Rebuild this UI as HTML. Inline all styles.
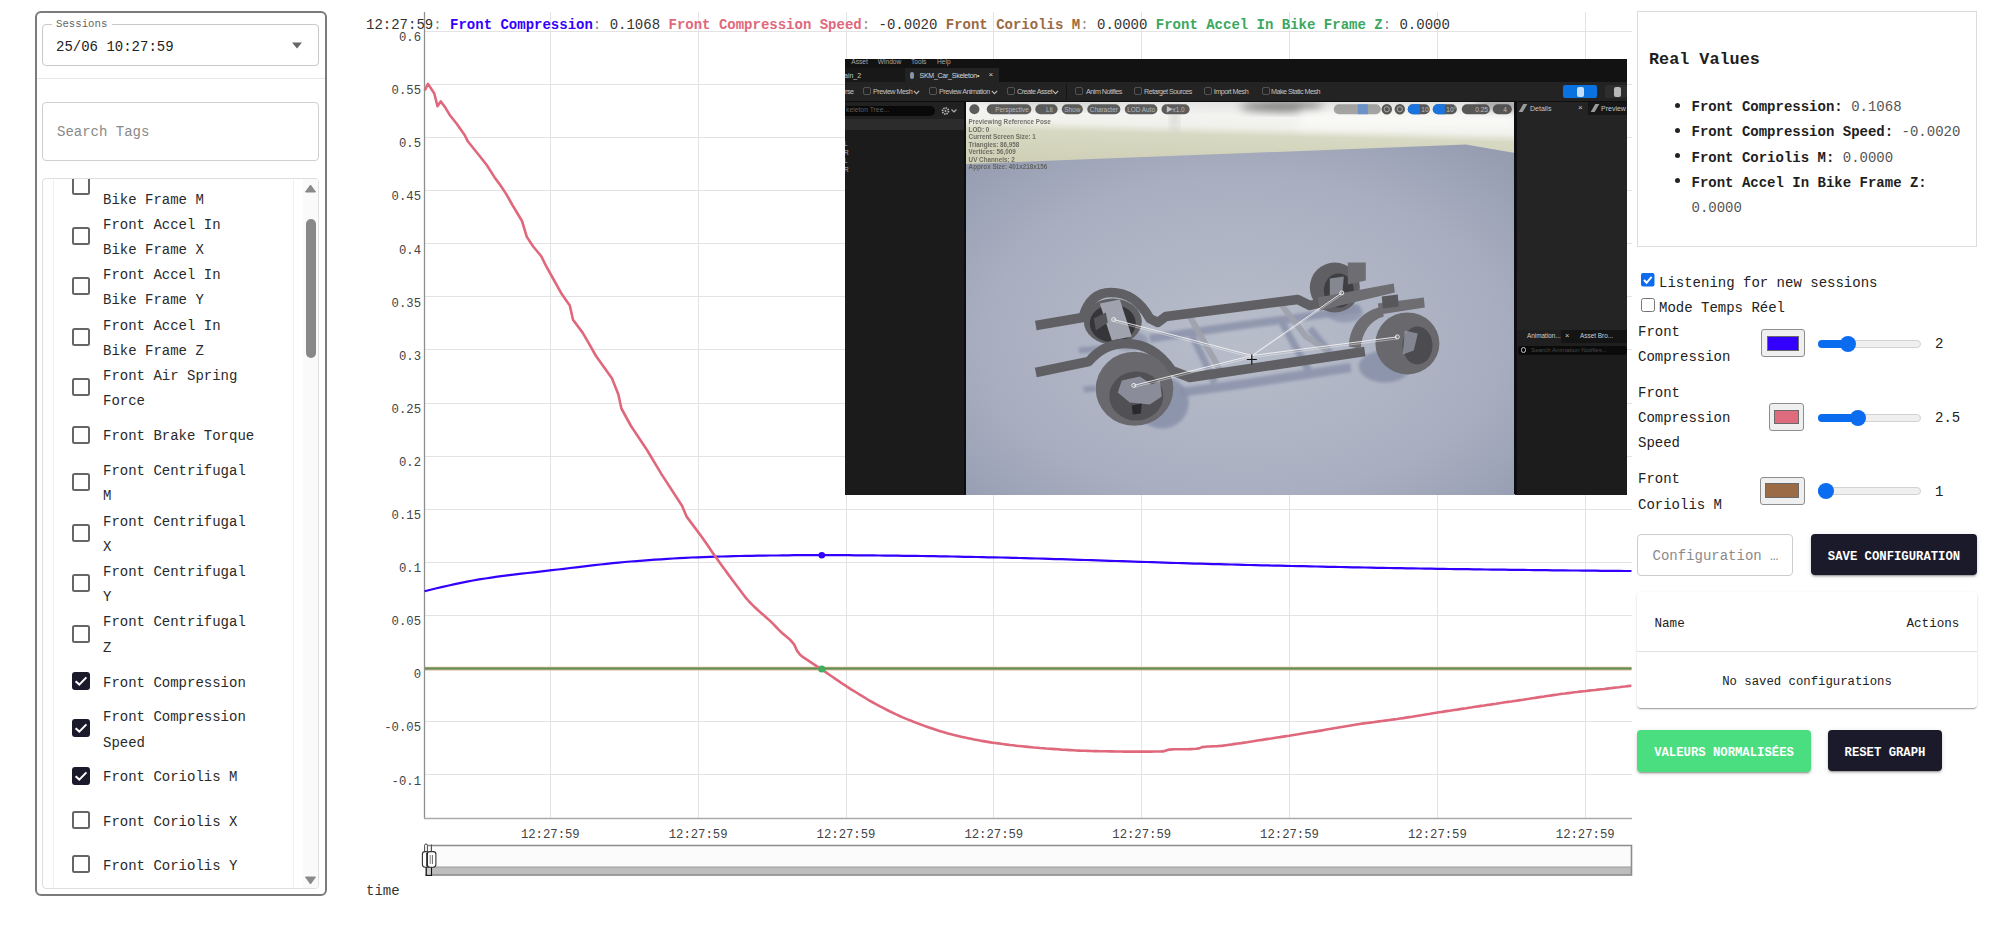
<!DOCTYPE html>
<html><head><meta charset="utf-8"><title>Dashboard</title><style>
html,body{margin:0;padding:0}
body{width:2000px;height:941px;overflow:hidden;background:#fff;position:relative;font-family:"Liberation Mono",monospace;font-size:14px}
.t{position:absolute;white-space:nowrap;font-family:"Liberation Mono",monospace;font-size:14px;line-height:16px}
i{font-style:normal;color:#888}
.ylab{left:340px;width:81px;text-align:right;font-size:12.25px;color:#444}
.xlab{top:827px;width:80px;text-align:center;font-size:12.25px;color:#444}
.btn{position:absolute;box-sizing:border-box;padding-top:4px;border-radius:4px;color:#fff;font-family:"Liberation Mono",monospace;font-weight:bold;font-size:12.25px;display:flex;align-items:center;justify-content:center;box-shadow:0 3px 1px -2px rgba(0,0,0,0.2),0 2px 2px 0 rgba(0,0,0,0.14),0 1px 5px 0 rgba(0,0,0,0.12)}
</style></head>
<body>
<svg style="position:absolute;left:0;top:0" width="2000" height="941">
<line x1="424" y1="31.5" x2="1632" y2="31.5" stroke="#e3e3e3" stroke-width="1"/>
<line x1="424" y1="84.5" x2="1632" y2="84.5" stroke="#e3e3e3" stroke-width="1"/>
<line x1="424" y1="137.5" x2="1632" y2="137.5" stroke="#e3e3e3" stroke-width="1"/>
<line x1="424" y1="190.5" x2="1632" y2="190.5" stroke="#e3e3e3" stroke-width="1"/>
<line x1="424" y1="243.5" x2="1632" y2="243.5" stroke="#e3e3e3" stroke-width="1"/>
<line x1="424" y1="296.5" x2="1632" y2="296.5" stroke="#e3e3e3" stroke-width="1"/>
<line x1="424" y1="349.5" x2="1632" y2="349.5" stroke="#e3e3e3" stroke-width="1"/>
<line x1="424" y1="403.5" x2="1632" y2="403.5" stroke="#e3e3e3" stroke-width="1"/>
<line x1="424" y1="456.5" x2="1632" y2="456.5" stroke="#e3e3e3" stroke-width="1"/>
<line x1="424" y1="509.5" x2="1632" y2="509.5" stroke="#e3e3e3" stroke-width="1"/>
<line x1="424" y1="562.5" x2="1632" y2="562.5" stroke="#e3e3e3" stroke-width="1"/>
<line x1="424" y1="615.5" x2="1632" y2="615.5" stroke="#e3e3e3" stroke-width="1"/>
<line x1="424" y1="668.5" x2="1632" y2="668.5" stroke="#e3e3e3" stroke-width="1"/>
<line x1="424" y1="721.5" x2="1632" y2="721.5" stroke="#e3e3e3" stroke-width="1"/>
<line x1="424" y1="774.5" x2="1632" y2="774.5" stroke="#e3e3e3" stroke-width="1"/>
<line x1="550.5" y1="12" x2="550.5" y2="818" stroke="#e3e3e3" stroke-width="1"/>
<line x1="698.5" y1="12" x2="698.5" y2="818" stroke="#e3e3e3" stroke-width="1"/>
<line x1="846.5" y1="12" x2="846.5" y2="818" stroke="#e3e3e3" stroke-width="1"/>
<line x1="993.5" y1="12" x2="993.5" y2="818" stroke="#e3e3e3" stroke-width="1"/>
<line x1="1141.5" y1="12" x2="1141.5" y2="818" stroke="#e3e3e3" stroke-width="1"/>
<line x1="1289.5" y1="12" x2="1289.5" y2="818" stroke="#e3e3e3" stroke-width="1"/>
<line x1="1437.5" y1="12" x2="1437.5" y2="818" stroke="#e3e3e3" stroke-width="1"/>
<line x1="1585.5" y1="12" x2="1585.5" y2="818" stroke="#e3e3e3" stroke-width="1"/>
<line x1="424.5" y1="12" x2="424.5" y2="818.5" stroke="#8f8f8f" stroke-width="1.3"/>
<line x1="424" y1="818.5" x2="1632" y2="818.5" stroke="#aaa" stroke-width="1.5"/>
<line x1="425" y1="668.6" x2="1631.5" y2="668.6" stroke="#d7b39a" stroke-width="3.6"/>
<line x1="425" y1="668.6" x2="1631.5" y2="668.6" stroke="#5f8f4f" stroke-width="2"/>
<path d="M424.5,591.3 L430.6,589.8 L436.6,588.3 L442.7,586.9 L448.8,585.5 L454.8,584.1 L460.9,582.8 L467.0,581.6 L473.0,580.5 L479.1,579.4 L485.2,578.5 L491.2,577.6 L497.3,576.7 L503.3,575.9 L509.4,575.1 L515.5,574.4 L521.5,573.7 L527.6,573.0 L533.7,572.3 L539.7,571.6 L545.8,570.9 L551.9,570.2 L557.9,569.5 L564.0,568.8 L570.1,568.0 L576.1,567.3 L582.2,566.6 L588.3,565.8 L594.3,565.1 L600.4,564.5 L606.5,563.8 L612.5,563.2 L618.6,562.6 L624.7,562.0 L630.7,561.5 L636.8,561.1 L642.9,560.6 L648.9,560.1 L655.0,559.7 L661.0,559.3 L667.1,558.9 L673.2,558.5 L679.2,558.1 L685.3,557.8 L691.4,557.5 L697.4,557.3 L703.5,557.1 L709.6,556.8 L715.6,556.7 L721.7,556.5 L727.8,556.3 L733.8,556.2 L739.9,556.0 L746.0,555.9 L752.0,555.8 L758.1,555.7 L764.2,555.6 L770.2,555.5 L776.3,555.5 L782.4,555.4 L788.4,555.3 L794.5,555.2 L800.6,555.2 L806.6,555.1 L812.7,555.1 L818.7,555.1 L824.8,555.1 L830.9,555.1 L836.9,555.1 L843.0,555.2 L849.1,555.2 L855.1,555.3 L861.2,555.3 L867.3,555.4 L873.3,555.4 L879.4,555.5 L885.5,555.6 L891.5,555.6 L897.6,555.7 L903.7,555.8 L909.7,555.8 L915.8,555.9 L921.9,556.0 L927.9,556.1 L934.0,556.2 L940.1,556.3 L946.1,556.4 L952.2,556.5 L958.2,556.6 L964.3,556.8 L970.4,556.9 L976.4,557.0 L982.5,557.1 L988.6,557.3 L994.6,557.4 L1000.7,557.5 L1006.8,557.7 L1012.8,557.8 L1018.9,558.0 L1025.0,558.1 L1031.0,558.3 L1037.1,558.5 L1043.2,558.7 L1049.2,558.9 L1055.3,559.1 L1061.4,559.2 L1067.4,559.4 L1073.5,559.6 L1079.6,559.8 L1085.6,560.0 L1091.7,560.2 L1097.8,560.4 L1103.8,560.6 L1109.9,560.8 L1115.9,561.0 L1122.0,561.2 L1128.1,561.4 L1134.1,561.6 L1140.2,561.8 L1146.3,562.0 L1152.3,562.2 L1158.4,562.4 L1164.5,562.6 L1170.5,562.8 L1176.6,563.0 L1182.7,563.2 L1188.7,563.4 L1194.8,563.6 L1200.9,563.7 L1206.9,563.9 L1213.0,564.1 L1219.1,564.2 L1225.1,564.4 L1231.2,564.5 L1237.3,564.7 L1243.3,564.8 L1249.4,565.0 L1255.4,565.1 L1261.5,565.3 L1267.6,565.4 L1273.6,565.6 L1279.7,565.7 L1285.8,565.8 L1291.8,566.0 L1297.9,566.1 L1304.0,566.2 L1310.0,566.4 L1316.1,566.5 L1322.2,566.6 L1328.2,566.8 L1334.3,566.9 L1340.4,567.0 L1346.4,567.1 L1352.5,567.3 L1358.6,567.4 L1364.6,567.5 L1370.7,567.6 L1376.8,567.8 L1382.8,567.9 L1388.9,568.0 L1395.0,568.1 L1401.0,568.2 L1407.1,568.3 L1413.1,568.4 L1419.2,568.5 L1425.3,568.6 L1431.3,568.7 L1437.4,568.8 L1443.5,568.9 L1449.5,569.0 L1455.6,569.1 L1461.7,569.1 L1467.7,569.2 L1473.8,569.3 L1479.9,569.4 L1485.9,569.5 L1492.0,569.6 L1498.1,569.6 L1504.1,569.7 L1510.2,569.8 L1516.3,569.9 L1522.3,569.9 L1528.4,570.0 L1534.5,570.1 L1540.5,570.2 L1546.6,570.2 L1552.7,570.3 L1558.7,570.4 L1564.8,570.4 L1570.8,570.5 L1576.9,570.5 L1583.0,570.6 L1589.0,570.7 L1595.1,570.7 L1601.2,570.8 L1607.2,570.8 L1613.3,570.9 L1619.4,570.9 L1625.4,571.0 L1631.5,571.0" fill="none" stroke="#3300ff" stroke-width="2.2" stroke-linejoin="round"/>
<path d="M424.8,90.3 L428.0,83.9 L434.3,93.5 L437.5,106.2 L440.7,101.4 L445.5,107.8 L450.3,115.8 L456.7,123.8 L464.6,134.9 L467.8,141.3 L474.2,149.3 L480.6,157.2 L486.9,165.2 L494.9,177.9 L499.7,184.3 L506.1,193.9 L512.4,205.0 L522.0,221.0 L526.8,236.9 L533.2,246.5 L541.1,256.0 L545.9,265.6 L553.9,280.0 L561.9,294.3 L569.8,305.5 L573.0,319.8 L582.6,332.6 L589.0,343.7 L596.0,356.0 L611.9,378.3 L618.3,394.2 L621.4,408.5 L631.0,426.0 L647.0,450.0 L661.3,473.9 L682.0,505.8 L686.8,516.9 L701.1,536.0 L704.1,540.2 L707.1,544.6 L710.1,549.0 L713.1,553.4 L716.1,557.6 L719.1,561.8 L722.1,566.0 L725.1,570.1 L728.1,574.1 L731.1,578.2 L734.1,582.2 L737.1,586.2 L740.1,590.3 L743.1,594.3 L746.1,598.1 L749.1,601.5 L752.1,604.6 L755.1,607.5 L758.1,610.3 L761.1,612.9 L764.1,615.5 L767.1,618.2 L770.1,620.9 L773.1,623.9 L776.1,627.0 L779.1,630.1 L782.1,633.0 L785.1,635.5 L788.1,637.9 L791.1,640.8 L794.1,644.4 L797.1,650.9 L800.1,654.8 L803.1,657.2 L806.1,659.1 L809.1,661.1 L812.1,663.1 L815.1,665.1 L818.1,667.1 L821.1,669.0 L824.1,671.1 L827.1,673.1 L830.1,675.2 L833.1,677.3 L836.1,679.4 L839.1,681.4 L842.1,683.5 L845.1,685.4 L848.1,687.3 L851.1,689.3 L854.1,691.2 L857.1,693.0 L860.1,694.9 L863.1,696.7 L866.1,698.5 L869.1,700.3 L872.1,702.0 L875.1,703.7 L878.1,705.3 L881.1,706.9 L884.1,708.4 L887.1,710.0 L890.1,711.5 L893.1,712.9 L896.1,714.4 L899.1,715.7 L902.1,717.1 L905.1,718.4 L908.1,719.6 L911.1,720.8 L914.1,722.0 L917.1,723.1 L920.1,724.3 L923.1,725.4 L926.1,726.5 L929.1,727.5 L932.1,728.5 L935.1,729.5 L938.1,730.5 L941.1,731.4 L944.1,732.3 L947.1,733.2 L950.1,734.0 L953.1,734.8 L956.1,735.5 L959.1,736.2 L962.1,736.9 L965.1,737.6 L968.1,738.2 L971.1,738.8 L974.1,739.4 L977.1,740.0 L980.1,740.6 L983.1,741.1 L986.1,741.6 L989.1,742.1 L992.1,742.6 L995.1,743.0 L998.1,743.4 L1001.1,743.8 L1004.1,744.2 L1007.1,744.6 L1010.1,745.0 L1013.1,745.3 L1016.1,745.7 L1019.1,746.0 L1022.1,746.3 L1025.1,746.6 L1028.1,746.9 L1031.1,747.2 L1034.1,747.5 L1037.1,747.7 L1040.1,748.0 L1043.1,748.2 L1046.1,748.5 L1049.1,748.7 L1052.1,748.9 L1055.1,749.1 L1058.1,749.3 L1061.1,749.6 L1064.1,749.8 L1067.1,749.9 L1070.1,750.1 L1073.1,750.3 L1076.1,750.5 L1079.1,750.6 L1082.1,750.7 L1085.1,750.8 L1088.1,750.9 L1091.1,751.0 L1094.1,751.1 L1097.1,751.1 L1100.1,751.2 L1103.1,751.3 L1106.1,751.3 L1109.1,751.4 L1112.1,751.4 L1115.1,751.5 L1118.1,751.5 L1121.1,751.5 L1124.1,751.6 L1127.1,751.6 L1130.1,751.6 L1133.1,751.6 L1136.1,751.6 L1139.1,751.6 L1142.1,751.6 L1145.1,751.6 L1148.1,751.6 L1151.1,751.6 L1154.1,751.5 L1157.1,751.5 L1160.1,751.5 L1163.1,751.4 L1166.1,750.5 L1169.1,749.6 L1172.1,749.4 L1175.1,749.3 L1178.1,749.3 L1181.1,749.2 L1184.1,749.2 L1187.1,749.2 L1190.1,749.1 L1193.1,749.0 L1196.1,748.8 L1199.1,748.4 L1202.1,747.1 L1205.1,746.7 L1208.1,746.5 L1211.1,746.4 L1214.1,746.2 L1217.1,746.1 L1220.1,745.9 L1223.1,745.6 L1226.1,745.2 L1229.1,744.8 L1232.1,744.4 L1235.1,743.9 L1238.1,743.5 L1241.1,743.1 L1244.1,742.6 L1247.1,742.2 L1250.1,741.7 L1253.1,741.3 L1256.1,740.8 L1259.1,740.3 L1262.1,739.9 L1265.1,739.4 L1268.1,738.9 L1271.1,738.5 L1274.1,738.0 L1277.1,737.5 L1280.1,737.1 L1283.1,736.6 L1286.1,736.1 L1289.1,735.7 L1292.1,735.2 L1295.1,734.7 L1298.1,734.3 L1301.1,733.8 L1304.1,733.3 L1307.1,732.8 L1310.1,732.3 L1313.1,731.9 L1316.1,731.4 L1319.1,730.9 L1322.1,730.4 L1325.1,729.8 L1328.1,729.3 L1331.1,728.8 L1334.1,728.2 L1337.1,727.7 L1340.1,727.2 L1343.1,726.7 L1346.1,726.2 L1349.1,725.7 L1352.1,725.2 L1355.1,724.7 L1358.1,724.2 L1361.1,723.8 L1364.1,723.4 L1367.1,723.0 L1370.1,722.6 L1373.1,722.2 L1376.1,721.8 L1379.1,721.4 L1382.1,721.0 L1385.1,720.6 L1388.1,720.2 L1391.1,719.8 L1394.1,719.4 L1397.1,719.0 L1400.1,718.5 L1403.1,718.1 L1406.1,717.6 L1409.1,717.1 L1412.1,716.7 L1415.1,716.2 L1418.1,715.7 L1421.1,715.2 L1424.1,714.7 L1427.1,714.2 L1430.1,713.8 L1433.1,713.3 L1436.1,712.8 L1439.1,712.3 L1442.1,711.9 L1445.1,711.4 L1448.1,710.9 L1451.1,710.5 L1454.1,710.0 L1457.1,709.6 L1460.1,709.1 L1463.1,708.6 L1466.1,708.2 L1469.1,707.7 L1472.1,707.3 L1475.1,706.8 L1478.1,706.4 L1481.1,705.9 L1484.1,705.5 L1487.1,705.0 L1490.1,704.6 L1493.1,704.1 L1496.1,703.7 L1499.1,703.2 L1502.1,702.8 L1505.1,702.3 L1508.1,701.9 L1511.1,701.5 L1514.1,701.0 L1517.1,700.6 L1520.1,700.1 L1523.1,699.7 L1526.1,699.2 L1529.1,698.8 L1532.1,698.3 L1535.1,697.9 L1538.1,697.4 L1541.1,696.9 L1544.1,696.5 L1547.1,696.0 L1550.1,695.6 L1553.1,695.1 L1556.1,694.7 L1559.1,694.3 L1562.1,693.8 L1565.1,693.5 L1568.1,693.1 L1571.1,692.7 L1574.1,692.3 L1577.1,692.0 L1580.1,691.6 L1583.1,691.3 L1586.1,691.0 L1589.1,690.6 L1592.1,690.3 L1595.1,690.0 L1598.1,689.6 L1601.1,689.3 L1604.1,689.0 L1607.1,688.6 L1610.1,688.2 L1613.1,687.9 L1616.1,687.5 L1619.1,687.2 L1622.1,686.8 L1625.1,686.5 L1628.1,686.1 L1631.1,685.7 L1631.4,685.7" fill="none" stroke="#e0687c" stroke-width="2.6" stroke-linejoin="round"/>
<circle cx="821.8" cy="555.2" r="3.3" fill="#3300ff"/>
<circle cx="821.8" cy="669" r="3.6" fill="#3fae5e"/>
<rect x="425" y="845" width="1206.5" height="30" fill="#fbfbfb"/>
<rect x="425" y="867" width="1206.5" height="8.5" fill="#bdbdbd"/>
<path d="M425,875 L1631.5,875 L1631.5,845.5 L425,845.5" fill="none" stroke="#8c8c8c" stroke-width="1.6"/>
<line x1="425" y1="867" x2="1631.5" y2="867" stroke="#9a9a9a" stroke-width="1"/>
<rect x="424.6" y="844" width="2.8" height="9" rx="1.4" fill="#fff" stroke="#333" stroke-width="0.9"/>
<rect x="426.3" y="867" width="5.2" height="8.4" fill="#ccc" stroke="#111" stroke-width="1.1"/>
<rect x="430.8" y="844.5" width="1.2" height="8" fill="#555"/>
<rect x="422.4" y="851.6" width="6" height="15.6" rx="2.6" fill="#fff" stroke="#333" stroke-width="1.1"/>
<rect x="427.3" y="851.6" width="8.6" height="15.6" rx="2.6" fill="#fff" stroke="#333" stroke-width="1.1"/>
<line x1="426.9" y1="853" x2="426.9" y2="866" stroke="#111" stroke-width="1.2"/>
<line x1="430.2" y1="855" x2="430.2" y2="864" stroke="#777" stroke-width="0.9"/><line x1="432.4" y1="855" x2="432.4" y2="864" stroke="#555" stroke-width="0.9"/>
</svg>
<div class="t ylab" style="top:30.1px">0.6</div>
<div class="t ylab" style="top:83.2px">0.55</div>
<div class="t ylab" style="top:136.3px">0.5</div>
<div class="t ylab" style="top:189.4px">0.45</div>
<div class="t ylab" style="top:242.5px">0.4</div>
<div class="t ylab" style="top:295.6px">0.35</div>
<div class="t ylab" style="top:348.7px">0.3</div>
<div class="t ylab" style="top:401.8px">0.25</div>
<div class="t ylab" style="top:454.9px">0.2</div>
<div class="t ylab" style="top:508.0px">0.15</div>
<div class="t ylab" style="top:561.1px">0.1</div>
<div class="t ylab" style="top:614.2px">0.05</div>
<div class="t ylab" style="top:667.3px">0</div>
<div class="t ylab" style="top:720.4px">-0.05</div>
<div class="t ylab" style="top:773.5px">-0.1</div>
<div class="t xlab" style="left:510.3px">12:27:59</div>
<div class="t xlab" style="left:658.1px">12:27:59</div>
<div class="t xlab" style="left:806.0px">12:27:59</div>
<div class="t xlab" style="left:953.8px">12:27:59</div>
<div class="t xlab" style="left:1101.7px">12:27:59</div>
<div class="t xlab" style="left:1249.5px">12:27:59</div>
<div class="t xlab" style="left:1397.4px">12:27:59</div>
<div class="t xlab" style="left:1545.2px">12:27:59</div>
<div class="t" style="left:366px;top:883px;color:#333">time</div>
<div class="t" style="left:366px;top:16.8px;color:#333;white-space:pre">12:27:59<i>:</i> <b style="color:#3300ff">Front Compression</b><i>:</i> 0.1068 <b style="color:#e0687c">Front Compression Speed</b><i>:</i> -0.0020 <b style="color:#9b6a43">Front Coriolis M</b><i>:</i> 0.0000 <b style="color:#3aa860">Front Accel In Bike Frame Z</b><i>:</i> 0.0000</div>
<div style="position:absolute;left:845px;top:59px;width:782px;height:435.6px;background:#1b1b1b;overflow:hidden">
<div style="position:absolute;left:0.0px;top:0.0px;width:782.0px;height:23.2px;background:#121212;"></div>
<div style="position:absolute;left:0.0px;top:9.0px;width:60.0px;height:14.2px;background:#181818;"></div>
<div style="position:absolute;left:60.0px;top:9.3px;width:94.0px;height:13.9px;background:#232323;"></div>
<div style="position:absolute;left:6.3px;top:-0.5px;font:6.6px/1 'Liberation Sans',sans-serif;color:#a8a8a8;white-space:pre;">Asset</div>
<div style="position:absolute;left:32.8px;top:-0.5px;font:6.6px/1 'Liberation Sans',sans-serif;color:#a8a8a8;white-space:pre;">Window</div>
<div style="position:absolute;left:66.0px;top:-0.5px;font:6.6px/1 'Liberation Sans',sans-serif;color:#a8a8a8;white-space:pre;">Tools</div>
<div style="position:absolute;left:92.0px;top:-0.5px;font:6.6px/1 'Liberation Sans',sans-serif;color:#a8a8a8;white-space:pre;">Help</div>
<div style="position:absolute;left:-1.0px;top:12.5px;font:7px/1 'Liberation Sans',sans-serif;color:#c8c8c8;white-space:pre;">ain_2</div>
<div style="position:absolute;left:74.5px;top:12.5px;font:7px/1 'Liberation Sans',sans-serif;color:#d8d8d8;white-space:pre;letter-spacing:-0.25px">SKM_Car_Skeleton•</div>
<div style="position:absolute;left:143.5px;top:12.2px;font:8px/1 'Liberation Sans',sans-serif;color:#cfcfcf;white-space:pre;">×</div>
<div style="position:absolute;left:64.5px;top:12.5px;width:4.5px;height:7.5px;background:#8a93a8;border-radius:2px"></div>
<div style="position:absolute;left:0.0px;top:23.2px;width:782.0px;height:18.6px;background:#232323;"></div>
<div style="position:absolute;left:0.0px;top:41.8px;width:782.0px;height:1.0px;background:#0e0e0e;"></div>
<div style="position:absolute;left:0.0px;top:28.5px;font:7.2px/1 'Liberation Sans',sans-serif;color:#c4c4c4;white-space:pre;letter-spacing:-0.5px">rse</div>
<div style="position:absolute;left:28.0px;top:28.5px;font:7.2px/1 'Liberation Sans',sans-serif;color:#c4c4c4;white-space:pre;letter-spacing:-0.5px">Preview Mesh</div>
<div style="position:absolute;left:94.0px;top:28.5px;font:7.2px/1 'Liberation Sans',sans-serif;color:#c4c4c4;white-space:pre;letter-spacing:-0.5px">Preview Animation</div>
<div style="position:absolute;left:172.0px;top:28.5px;font:7.2px/1 'Liberation Sans',sans-serif;color:#c4c4c4;white-space:pre;letter-spacing:-0.5px">Create Asset</div>
<div style="position:absolute;left:241.0px;top:28.5px;font:7.2px/1 'Liberation Sans',sans-serif;color:#c4c4c4;white-space:pre;letter-spacing:-0.5px">Anim Notifies</div>
<div style="position:absolute;left:299.0px;top:28.5px;font:7.2px/1 'Liberation Sans',sans-serif;color:#c4c4c4;white-space:pre;letter-spacing:-0.5px">Retarget Sources</div>
<div style="position:absolute;left:368.7px;top:28.5px;font:7.2px/1 'Liberation Sans',sans-serif;color:#c4c4c4;white-space:pre;letter-spacing:-0.5px">Import Mesh</div>
<div style="position:absolute;left:426.0px;top:28.5px;font:7.2px/1 'Liberation Sans',sans-serif;color:#c4c4c4;white-space:pre;letter-spacing:-0.5px">Make Static Mesh</div>
<div style="position:absolute;left:18.0px;top:28.0px;width:8.0px;height:8.0px;background:transparent;border:1px solid #7a7a7a;border-radius:2px;box-sizing:border-box;opacity:.55"></div>
<div style="position:absolute;left:83.6px;top:28.0px;width:8.0px;height:8.0px;background:transparent;border:1px solid #7a7a7a;border-radius:2px;box-sizing:border-box;opacity:.55"></div>
<div style="position:absolute;left:162.0px;top:28.0px;width:8.0px;height:8.0px;background:transparent;border:1px solid #7a7a7a;border-radius:2px;box-sizing:border-box;opacity:.55"></div>
<div style="position:absolute;left:230.0px;top:28.0px;width:8.0px;height:8.0px;background:transparent;border:1px solid #7a7a7a;border-radius:2px;box-sizing:border-box;opacity:.55"></div>
<div style="position:absolute;left:289.0px;top:28.0px;width:8.0px;height:8.0px;background:transparent;border:1px solid #7a7a7a;border-radius:2px;box-sizing:border-box;opacity:.55"></div>
<div style="position:absolute;left:359.0px;top:28.0px;width:8.0px;height:8.0px;background:transparent;border:1px solid #7a7a7a;border-radius:2px;box-sizing:border-box;opacity:.55"></div>
<div style="position:absolute;left:417.0px;top:28.0px;width:8.0px;height:8.0px;background:transparent;border:1px solid #7a7a7a;border-radius:2px;box-sizing:border-box;opacity:.55"></div>
<div style="position:absolute;left:221.0px;top:24.0px;width:1.0px;height:17.0px;background:#161616;"></div>
<svg style="position:absolute;left:67.5px;top:30.5px" width="7" height="5"><path d="M0.8,0.8 L3.5,3.6 L6.2,0.8" fill="none" stroke="#bbb" stroke-width="1.1"/></svg>
<svg style="position:absolute;left:145.5px;top:30.5px" width="7" height="5"><path d="M0.8,0.8 L3.5,3.6 L6.2,0.8" fill="none" stroke="#bbb" stroke-width="1.1"/></svg>
<svg style="position:absolute;left:206.5px;top:30.5px" width="7" height="5"><path d="M0.8,0.8 L3.5,3.6 L6.2,0.8" fill="none" stroke="#bbb" stroke-width="1.1"/></svg>
<div style="position:absolute;left:718.3px;top:26.0px;width:34.2px;height:13.0px;background:#0a72e0;border-radius:2px"></div>
<div style="position:absolute;left:732.0px;top:27.5px;width:7.0px;height:10.0px;background:#e6f0ff;border-radius:2px;opacity:.85"></div>
<div style="position:absolute;left:760.0px;top:26.0px;width:22.0px;height:13.0px;background:#2e2e2e;border-radius:2px"></div>
<div style="position:absolute;left:769.0px;top:27.5px;width:7.0px;height:10.0px;background:#d0d0d0;border-radius:2px;opacity:.85"></div>
<div style="position:absolute;left:0.0px;top:42.8px;width:121.0px;height:392.2px;background:#1b1b1b;"></div>
<div style="position:absolute;left:0.0px;top:42.8px;width:119.0px;height:17.2px;background:#212121;"></div>
<div style="position:absolute;left:118.5px;top:42.8px;width:2.7px;height:392.2px;background:#0e0e0e;"></div>
<div style="position:absolute;left:-5.0px;top:46.5px;width:95.0px;height:10.5px;background:#090909;border-radius:6px"></div>
<div style="position:absolute;left:1.0px;top:48.0px;font:6.8px/1 'Liberation Sans',sans-serif;color:#5e5e5e;white-space:pre;">keleton Tree...</div>
<svg style="position:absolute;left:96.0px;top:46.5px" width="18" height="10"><circle cx="4.5" cy="5" r="3" fill="none" stroke="#b0b0b0" stroke-width="1.8" stroke-dasharray="1.4 0.9"/><circle cx="4.5" cy="5" r="1" fill="#b0b0b0"/><path d="M10.5,3.5 L13,6 L15.5,3.5" fill="none" stroke="#b0b0b0" stroke-width="1.1"/></svg>
<div style="position:absolute;left:0.0px;top:59.7px;width:118.5px;height:11.3px;background:#2c2c2c;"></div>
<div style="position:absolute;left:-1.0px;top:82.0px;font:6.5px/1 'Liberation Sans',sans-serif;color:#b0b0b0;white-space:pre;">L</div>
<div style="position:absolute;left:-1.0px;top:90.6px;font:6.5px/1 'Liberation Sans',sans-serif;color:#b0b0b0;white-space:pre;">R</div>
<div style="position:absolute;left:-1.0px;top:99.2px;font:6.5px/1 'Liberation Sans',sans-serif;color:#b0b0b0;white-space:pre;">L</div>
<div style="position:absolute;left:-1.0px;top:107.8px;font:6.5px/1 'Liberation Sans',sans-serif;color:#b0b0b0;white-space:pre;">R</div>
<svg style="position:absolute;left:121.2px;top:42.5px" width="549" height="393" viewBox="966.2 101.5 549 393"><defs>
<linearGradient id="sky" gradientUnits="userSpaceOnUse" x1="1241" y1="101.5" x2="1239.25" y2="171.5"><stop offset="0" stop-color="#e2e2e0"/><stop offset="0.2" stop-color="#f3f3f1"/><stop offset="0.36" stop-color="#f0f0eb"/><stop offset="0.48" stop-color="#d8d9c3"/><stop offset="1" stop-color="#cdceb3"/></linearGradient>
<radialGradient id="floor" cx="0.5" cy="0.55" r="0.7"><stop offset="0" stop-color="#b8bdca"/><stop offset="0.65" stop-color="#a9afc0"/><stop offset="1" stop-color="#969db1"/></radialGradient>
<filter id="bl" x="-50%" y="-50%" width="200%" height="200%"><feGaussianBlur stdDeviation="4"/></filter>
<filter id="bl2" x="-20%" y="-20%" width="140%" height="140%"><feGaussianBlur stdDeviation="1.5"/></filter>
</defs><rect x="966.2" y="101.5" width="549" height="70" fill="url(#sky)"/><ellipse cx="1282" cy="106" rx="42" ry="5" fill="#555" filter="url(#bl)" opacity="0.75"/><ellipse cx="1500" cy="106" rx="25" ry="6" fill="#666" filter="url(#bl)" opacity="0.6"/><ellipse cx="1060" cy="104" rx="70" ry="4" fill="#c9c9c6" filter="url(#bl)" opacity="0.7"/><rect x="1172" y="104" width="6" height="26" fill="#c4c4c0" filter="url(#bl)" opacity="0.7"/><rect x="1300" y="110" width="215" height="18" fill="#fafaf8" filter="url(#bl)" opacity="0.8"/><polygon points="966.2,163.5 1466,144 1515.2,152.5 1515.2,494.5 966.2,494.5" fill="url(#floor)"/><text x="968.8" y="123.4" font-family="Liberation Sans" font-size="6.3" font-weight="bold" fill="#5a5a52" opacity="0.85">Previewing Reference Pose</text><text x="968.8" y="131.0" font-family="Liberation Sans" font-size="6.3" font-weight="bold" fill="#5a5a52" opacity="0.85">LOD: 0</text><text x="968.8" y="138.5" font-family="Liberation Sans" font-size="6.3" font-weight="bold" fill="#5a5a52" opacity="0.85">Current Screen Size: 1</text><text x="968.8" y="146.1" font-family="Liberation Sans" font-size="6.3" font-weight="bold" fill="#5a5a52" opacity="0.85">Triangles: 86,958</text><text x="968.8" y="153.6" font-family="Liberation Sans" font-size="6.3" font-weight="bold" fill="#5a5a52" opacity="0.85">Vertices: 56,009</text><text x="968.8" y="161.2" font-family="Liberation Sans" font-size="6.3" font-weight="bold" fill="#5a5a52" opacity="0.85">UV Channels: 2</text><text x="968.8" y="168.7" font-family="Liberation Sans" font-size="6.3" font-weight="bold" fill="#5a5a52" opacity="0.85">Approx Size: 401x218x156</text><rect x="969.6" y="103.7" width="10.0" height="10" rx="5" fill="#4f4f4f" opacity="0.92"/><rect x="987" y="103.7" width="44.5" height="10" rx="5" fill="#4f4f4f" opacity="0.92"/><text x="1012.2" y="111.2" text-anchor="middle" font-family="Liberation Sans" font-size="6.4" fill="#b9b9b9">Perspective</text><rect x="1035.5" y="103.7" width="22.299999999999955" height="10" rx="5" fill="#4f4f4f" opacity="0.92"/><text x="1049.7" y="111.2" text-anchor="middle" font-family="Liberation Sans" font-size="6.4" fill="#b9b9b9">Lit</text><rect x="1062" y="103.7" width="21" height="10" rx="5" fill="#4f4f4f" opacity="0.92"/><text x="1072.5" y="111.2" text-anchor="middle" font-family="Liberation Sans" font-size="6.4" fill="#b9b9b9">Show</text><rect x="1087.5" y="103.7" width="33.0" height="10" rx="5" fill="#4f4f4f" opacity="0.92"/><text x="1104.0" y="111.2" text-anchor="middle" font-family="Liberation Sans" font-size="6.4" fill="#b9b9b9">Character</text><rect x="1125" y="103.7" width="32.59999999999991" height="10" rx="5" fill="#4f4f4f" opacity="0.92"/><text x="1141.3" y="111.2" text-anchor="middle" font-family="Liberation Sans" font-size="6.4" fill="#b9b9b9">LOD Auto</text><rect x="1161.7" y="103.7" width="28.09999999999991" height="10" rx="5" fill="#4f4f4f" opacity="0.92"/><text x="1178.8" y="111.2" text-anchor="middle" font-family="Liberation Sans" font-size="6.4" fill="#b9b9b9">x1.0</text><path d="M1167,105.5 L1173,108.7 L1167,111.9Z" fill="#c0c0c0"/><rect x="1334" y="103.7" width="47" height="10" rx="5" fill="#8a8a8a" opacity="0.75"/><rect x="1358" y="103.7" width="10" height="10" fill="#5b8fd0" opacity="0.8"/><circle cx="1387" cy="108.7" r="5.2" fill="#4a4a4a" opacity="0.92"/><circle cx="1387" cy="108.7" r="2.6" fill="none" stroke="#bbb" stroke-width="0.8"/><circle cx="1400" cy="108.7" r="5.2" fill="#4a4a4a" opacity="0.92"/><circle cx="1400" cy="108.7" r="2.6" fill="none" stroke="#bbb" stroke-width="0.8"/><rect x="1408" y="103.7" width="22" height="10" rx="5" fill="#4a4a4a" opacity="0.92"/><path d="M1413,103.7 L1420,103.7 L1420,113.7 L1413,113.7 A5,5 0 0 1 1413,103.7Z" fill="#1a74e0"/><text x="1421.5" y="111.3" font-family="Liberation Sans" font-size="6.5" fill="#bdbdbd">10</text><rect x="1433" y="103.7" width="24" height="10" rx="5" fill="#4a4a4a" opacity="0.92"/><path d="M1438,103.7 L1445,103.7 L1445,113.7 L1438,113.7 A5,5 0 0 1 1438,103.7Z" fill="#1a74e0"/><text x="1446.5" y="111.3" font-family="Liberation Sans" font-size="6.5" fill="#bdbdbd">10°</text><rect x="1462" y="103.7" width="28" height="10" rx="5" fill="#4a4a4a" opacity="0.92"/><text x="1475.5" y="111.3" font-family="Liberation Sans" font-size="6.5" fill="#bdbdbd">0.25</text><rect x="1493" y="103.7" width="19" height="10" rx="5" fill="#4a4a4a" opacity="0.92"/><text x="1503.5" y="111.3" font-family="Liberation Sans" font-size="6.5" fill="#bdbdbd">4</text><g fill="none" stroke="#8a92aa" stroke-linejoin="round" opacity="0.85" filter="url(#bl2)"><path d="M1079,350 L1102,348" stroke-width="6"/><path d="M1084,389 L1096,388" stroke-width="6"/><path d="M1180,392 L1240,384 L1351,367" stroke-width="9"/><path d="M1150,338 L1240,325 L1300,317 L1360,308" stroke-width="8"/><path d="M1190,330 L1215,382 M1280,318 L1310,372 M1310,328 L1330,352" stroke-width="7"/></g><ellipse cx="1162" cy="402" rx="27" ry="26" fill="#8a92aa" filter="url(#bl2)" opacity="0.9"/><ellipse cx="1385" cy="366" rx="26" ry="16" fill="#8a92aa" filter="url(#bl2)" opacity="0.9"/><ellipse cx="1345" cy="312" rx="18" ry="10" fill="#8a92aa" filter="url(#bl2)" opacity="0.7"/><ellipse cx="1128" cy="340" rx="20" ry="10" fill="#8a92aa" filter="url(#bl2)" opacity="0.7"/><g fill="none" stroke="#9fa2ac" stroke-width="6" opacity="0.9"><path d="M1190,316 L1220,369"/><path d="M1280,302 L1306,336 L1328,350"/></g><ellipse cx="1113" cy="321" rx="29" ry="23" fill="#606064"/><ellipse cx="1113" cy="323" rx="23" ry="19" fill="#36363a"/><path d="M1100,303 L1120,299 L1132,336 L1112,340Z" fill="#a0a3ad"/><path d="M1094,318 L1106,312 L1108,322 L1096,330Z" fill="#55555a"/><ellipse cx="1335" cy="287" rx="25" ry="25" fill="#606064"/><ellipse cx="1339" cy="290" rx="15" ry="17" fill="#3e3e43"/><path d="M1330,278 L1344,276 L1342,300 L1330,302Z" fill="#a5a8b2" opacity="0.7"/><g fill="none" stroke="#606064" stroke-width="9.5" stroke-linejoin="round"><path d="M1036,325 L1083,317 C1088,300 1098,292 1111,292 C1128,292 1140,300 1150,318 L1158,322 L1166,316 L1298,299 L1310,305 L1322,302"/></g><path d="M1318,297 L1394,283 L1395,292 L1320,310Z" fill="#6e6e72"/><path d="M1348,262 L1366,262 L1366,280 L1348,284Z" fill="#6e6e72"/><g fill="none" stroke="#606064" stroke-width="9.5" stroke-linejoin="round"><path d="M1036,372 L1089,361 C1100,348 1112,343 1126,343 C1145,343 1160,352 1172,370 L1190,377 L1365,351"/></g><path d="M1349,346 C1350,322 1365,310 1382,306 L1384,316 C1370,320 1362,332 1361,348Z" fill="#6e6e72"/><path d="M1378,303 L1424,297 L1425,307 L1380,314Z" fill="#6e6e72"/><path d="M1382,296 L1398,294 L1399,306 L1383,308Z" fill="#58585c"/><ellipse cx="1134.7" cy="388.3" rx="38.8" ry="37" fill="#69696d"/><ellipse cx="1136.5" cy="395.5" rx="27" ry="24.5" fill="#515155"/><path d="M1122,380 L1140,376 L1152,384 L1160,380 L1162,396 L1150,404 L1130,402 L1118,392Z" fill="#9ea2b0" opacity="0.75"/><path d="M1132,405 L1142,403 L1141,413 L1133,414Z" fill="#2a2a2e"/><ellipse cx="1407.6" cy="342.9" rx="32" ry="31" fill="#69696d"/><ellipse cx="1417.7" cy="345" rx="15" ry="19" fill="#4b4b50"/><path d="M1405,330 L1418,333 L1414,350 L1403,354Z" fill="#a9adba" opacity="0.6"/><g stroke="#f4f4f4" stroke-width="1" fill="none" opacity="0.9"><path d="M1113.9,319 L1252.2,355 M1134,384.9 L1252.2,355 M1342,292.4 L1252.2,355 M1397.5,336.4 L1252.2,355"/><path d="M1113.9,321 L1252.2,357 M1134,386.9 L1252.2,357 M1342,294.4 L1250,357 M1397.5,338.4 L1252.2,357" opacity="0.5"/></g><circle cx="1113.9" cy="319" r="2" fill="none" stroke="#eee" stroke-width="1"/><circle cx="1134" cy="384.9" r="2" fill="none" stroke="#eee" stroke-width="1"/><circle cx="1342" cy="292.4" r="2" fill="none" stroke="#eee" stroke-width="1"/><circle cx="1397.5" cy="336.4" r="2" fill="none" stroke="#eee" stroke-width="1"/><path d="M1252,354 L1252,364 M1247,359 L1257,359" stroke="#111" stroke-width="1.2"/></svg>
<div style="position:absolute;left:670.0px;top:42.8px;width:112.0px;height:392.2px;background:#1f1f1f;"></div>
<div style="position:absolute;left:669.0px;top:42.8px;width:2.5px;height:392.2px;background:#0d0d12;"></div>
<div style="position:absolute;left:671.5px;top:42.8px;width:110.5px;height:13.2px;background:#161616;"></div>
<div style="position:absolute;left:671.5px;top:42.8px;width:71.5px;height:13.2px;background:#242424;"></div>
<div style="position:absolute;left:685.0px;top:45.5px;font:7px/1 'Liberation Sans',sans-serif;color:#c8c8c8;white-space:pre;">Details</div>
<div style="position:absolute;left:733.0px;top:45.0px;font:8px/1 'Liberation Sans',sans-serif;color:#c8c8c8;white-space:pre;">×</div>
<div style="position:absolute;left:756.0px;top:45.5px;font:7px/1 'Liberation Sans',sans-serif;color:#c8c8c8;white-space:pre;">Preview</div>
<div style="position:absolute;left:676.0px;top:45.0px;width:4.0px;height:8.0px;background:#9a9a9a;transform:skewX(-30deg)"></div>
<div style="position:absolute;left:748.0px;top:45.0px;width:4.0px;height:8.0px;background:#9a9a9a;transform:skewX(-30deg)"></div>
<div style="position:absolute;left:671.5px;top:56.0px;width:110.5px;height:215.0px;background:#242424;"></div>
<div style="position:absolute;left:671.5px;top:270.5px;width:110.5px;height:13.5px;background:#141414;"></div>
<div style="position:absolute;left:671.5px;top:270.5px;width:44.5px;height:13.5px;background:#1f1f1f;"></div>
<div style="position:absolute;left:682.0px;top:273.5px;font:6.4px/1 'Liberation Sans',sans-serif;color:#cfcfcf;white-space:pre;">Animation...</div>
<div style="position:absolute;left:720.0px;top:273.0px;font:7.5px/1 'Liberation Sans',sans-serif;color:#cfcfcf;white-space:pre;">×</div>
<div style="position:absolute;left:735.0px;top:273.5px;font:6.4px/1 'Liberation Sans',sans-serif;color:#cfcfcf;white-space:pre;">Asset Bro...</div>
<div style="position:absolute;left:673.0px;top:286.5px;width:109.0px;height:9.5px;background:#0b0b0b;border-radius:3px"></div>
<div style="position:absolute;left:686.0px;top:287.8px;font:6.2px/1 'Liberation Sans',sans-serif;color:#4a4a4a;white-space:pre;">Search Animation Notifies...</div>
<div style="position:absolute;left:675.5px;top:288.0px;width:5.5px;height:5.5px;background:transparent;border:1px solid #c0c0c0;border-radius:50%;box-sizing:border-box"></div>
<div style="position:absolute;left:671.5px;top:296.0px;width:110.5px;height:139.0px;background:#1c1c1c;"></div>
</div>
<div style="position:absolute;left:35px;top:11px;width:288px;height:881px;border:2px solid #7b7b7b;border-radius:6px"></div>
<div style="position:absolute;left:42px;top:24px;width:275px;height:40px;border:1px solid #c9c9c9;border-radius:4px"></div>
<div style="position:absolute;left:52px;top:17px;width:60px;height:14px;background:#fff"></div>
<div class="t" style="left:56px;top:17.3px;font-size:10.7px;color:#666;line-height:14px">Sessions</div>
<div class="t" style="left:56px;top:38.8px;color:#222">25/06 10:27:59</div>
<svg style="position:absolute;left:290px;top:41px" width="14" height="9"><path d="M2,1.5 L12,1.5 L7,7.5Z" fill="#666"/></svg>
<div style="position:absolute;left:37px;top:78px;width:288px;height:1px;background:#e6e6e6"></div>
<div style="position:absolute;left:42px;top:102px;width:275px;height:57px;border:1px solid #cfcfcf;border-radius:4px"></div>
<div class="t" style="left:57px;top:123.5px;color:#8a8a8a">Search Tags</div>
<div style="position:absolute;left:42px;top:178px;width:275px;height:709px;border:1px solid #dedede;border-radius:4px;overflow:hidden">
<div style="position:absolute;left:10px;top:0;width:1px;height:709px;background:#f0f0f0"></div>
<div style="position:absolute;left:250px;top:0;width:1px;height:709px;background:#f0f0f0"></div>
<div style="position:absolute;left:260px;top:0;width:15px;height:709px;background:#fafafa"></div>
<svg style="position:absolute;left:262px;top:5px" width="12" height="10"><path d="M5.5,1 L10.5,8 L0.5,8Z" fill="#8a8a8a" stroke="#8a8a8a" stroke-width="1" stroke-linejoin="round"/></svg>
<div style="position:absolute;left:263px;top:40px;width:10px;height:139px;background:#888;border-radius:5px"></div>
<svg style="position:absolute;left:262px;top:697px" width="12" height="10"><path d="M0.5,1 L10.5,1 L5.5,8Z" fill="#8a8a8a" stroke="#8a8a8a" stroke-width="1" stroke-linejoin="round"/></svg>
<div style="position:absolute;left:29px;top:-2.5px;width:14px;height:14px;border:2px solid #666;border-radius:2.5px"></div>
<div class="t" style="left:60px;top:-16.6px;line-height:25.2px;color:#2a2a2a">Front Accel In<br>Bike Frame M</div>
<div style="position:absolute;left:29px;top:47.9px;width:14px;height:14px;border:2px solid #666;border-radius:2.5px"></div>
<div class="t" style="left:60px;top:33.8px;line-height:25.2px;color:#2a2a2a">Front Accel In<br>Bike Frame X</div>
<div style="position:absolute;left:29px;top:98.2px;width:14px;height:14px;border:2px solid #666;border-radius:2.5px"></div>
<div class="t" style="left:60px;top:84.1px;line-height:25.2px;color:#2a2a2a">Front Accel In<br>Bike Frame Y</div>
<div style="position:absolute;left:29px;top:148.6px;width:14px;height:14px;border:2px solid #666;border-radius:2.5px"></div>
<div class="t" style="left:60px;top:134.5px;line-height:25.2px;color:#2a2a2a">Front Accel In<br>Bike Frame Z</div>
<div style="position:absolute;left:29px;top:199.0px;width:14px;height:14px;border:2px solid #666;border-radius:2.5px"></div>
<div class="t" style="left:60px;top:184.9px;line-height:25.2px;color:#2a2a2a">Front Air Spring<br>Force</div>
<div style="position:absolute;left:29px;top:246.6px;width:14px;height:14px;border:2px solid #666;border-radius:2.5px"></div>
<div class="t" style="left:60px;top:245.1px;line-height:25.2px;color:#2a2a2a">Front Brake Torque</div>
<div style="position:absolute;left:29px;top:294.2px;width:14px;height:14px;border:2px solid #666;border-radius:2.5px"></div>
<div class="t" style="left:60px;top:280.1px;line-height:25.2px;color:#2a2a2a">Front Centrifugal<br>M</div>
<div style="position:absolute;left:29px;top:344.7px;width:14px;height:14px;border:2px solid #666;border-radius:2.5px"></div>
<div class="t" style="left:60px;top:330.6px;line-height:25.2px;color:#2a2a2a">Front Centrifugal<br>X</div>
<div style="position:absolute;left:29px;top:395.1px;width:14px;height:14px;border:2px solid #666;border-radius:2.5px"></div>
<div class="t" style="left:60px;top:381.0px;line-height:25.2px;color:#2a2a2a">Front Centrifugal<br>Y</div>
<div style="position:absolute;left:29px;top:445.5px;width:14px;height:14px;border:2px solid #666;border-radius:2.5px"></div>
<div class="t" style="left:60px;top:431.4px;line-height:25.2px;color:#2a2a2a">Front Centrifugal<br>Z</div>
<svg style="position:absolute;left:29px;top:493.0px" width="18" height="18"><rect x="0" y="0" width="18" height="18" rx="3" fill="#1b1a2b"/><path d="M3.6,9.2 L7.3,12.6 L14.4,5.4" fill="none" stroke="#fff" stroke-width="2"/></svg>
<div class="t" style="left:60px;top:491.5px;line-height:25.2px;color:#2a2a2a">Front Compression</div>
<svg style="position:absolute;left:29px;top:540.4px" width="18" height="18"><rect x="0" y="0" width="18" height="18" rx="3" fill="#1b1a2b"/><path d="M3.6,9.2 L7.3,12.6 L14.4,5.4" fill="none" stroke="#fff" stroke-width="2"/></svg>
<div class="t" style="left:60px;top:526.3px;line-height:25.2px;color:#2a2a2a">Front Compression<br>Speed</div>
<svg style="position:absolute;left:29px;top:587.9px" width="18" height="18"><rect x="0" y="0" width="18" height="18" rx="3" fill="#1b1a2b"/><path d="M3.6,9.2 L7.3,12.6 L14.4,5.4" fill="none" stroke="#fff" stroke-width="2"/></svg>
<div class="t" style="left:60px;top:586.4px;line-height:25.2px;color:#2a2a2a">Front Coriolis M</div>
<div style="position:absolute;left:29px;top:632.2px;width:14px;height:14px;border:2px solid #666;border-radius:2.5px"></div>
<div class="t" style="left:60px;top:630.7px;line-height:25.2px;color:#2a2a2a">Front Coriolis X</div>
<div style="position:absolute;left:29px;top:676.3px;width:14px;height:14px;border:2px solid #666;border-radius:2.5px"></div>
<div class="t" style="left:60px;top:674.8px;line-height:25.2px;color:#2a2a2a">Front Coriolis Y</div>
</div>
<div style="position:absolute;left:1637px;top:11px;width:338px;height:234px;border:1px solid #dcdcdc;background:#fff"></div>
<div class="t" style="left:1649px;top:52px;font-size:16.8px;font-weight:bold;color:#1e1e1e">Real Values</div>
<div style="position:absolute;left:1674.5px;top:102.5px;width:5px;height:5px;border-radius:50%;background:#222"></div>
<div class="t" style="left:1691.5px;top:99.0px;color:#1e1e1e;white-space:pre"><b>Front Compression:</b> <span style="color:#555">0.1068</span></div>
<div style="position:absolute;left:1674.5px;top:127.8px;width:5px;height:5px;border-radius:50%;background:#222"></div>
<div class="t" style="left:1691.5px;top:124.2px;color:#1e1e1e;white-space:pre"><b>Front Compression Speed:</b> <span style="color:#555">-0.0020</span></div>
<div style="position:absolute;left:1674.5px;top:153.0px;width:5px;height:5px;border-radius:50%;background:#222"></div>
<div class="t" style="left:1691.5px;top:149.5px;color:#1e1e1e;white-space:pre"><b>Front Coriolis M:</b> <span style="color:#555">0.0000</span></div>
<div style="position:absolute;left:1674.5px;top:178.2px;width:5px;height:5px;border-radius:50%;background:#222"></div>
<div class="t" style="left:1691.5px;top:174.8px;color:#1e1e1e;white-space:pre"><b>Front Accel In Bike Frame Z:</b></div>
<div class="t" style="left:1691.5px;top:200.0px;color:#555">0.0000</div>
<svg style="position:absolute;left:1641px;top:273px" width="14" height="14"><rect x="0" y="0" width="13.5" height="13.5" rx="2" fill="#0b6cf0"/><path d="M3,7 L5.6,9.8 L10.6,3.8" fill="none" stroke="#fff" stroke-width="2"/></svg>
<div class="t" style="left:1659px;top:275px;color:#222">Listening for new sessions</div>
<div style="position:absolute;left:1641px;top:298px;width:12px;height:12px;border:1px solid #767676;border-radius:2.5px"></div>
<div class="t" style="left:1659px;top:300px;color:#222">Mode Temps Réel</div>
<div class="t" style="left:1638px;top:319.8px;line-height:25.2px;color:#222">Front<br>Compression</div>
<div style="position:absolute;left:1761.0px;top:329.4px;width:41.5px;height:26.0px;border:1px solid #8d8d8d;border-radius:3px;background:#efefef"></div>
<div style="position:absolute;left:1767.0px;top:336.0px;width:30.0px;height:13.0px;border:1px solid #6a6a6a;background:#3300ff"></div>
<div style="position:absolute;left:1818px;top:339.8px;width:101px;height:6px;border:1px solid #d2d2d2;border-radius:4px;background:#efefef"></div>
<div style="position:absolute;left:1818px;top:339.8px;width:29.8px;height:8px;border-radius:4px;background:#0b6cf0"></div>
<div style="position:absolute;left:1839.8px;top:335.8px;width:16px;height:16px;border-radius:50%;background:#0b6cf0"></div>
<div class="t" style="left:1935px;top:336.3px;color:#222">2</div>
<div class="t" style="left:1638px;top:381.0px;line-height:25.2px;color:#222">Front<br>Compression<br>Speed</div>
<div style="position:absolute;left:1768.6px;top:403.4px;width:33.9px;height:26.0px;border:1px solid #8d8d8d;border-radius:3px;background:#efefef"></div>
<div style="position:absolute;left:1774.0px;top:409.7px;width:23.0px;height:12.8px;border:1px solid #6a6a6a;background:#df6b7f"></div>
<div style="position:absolute;left:1818px;top:413.6px;width:101px;height:6px;border:1px solid #d2d2d2;border-radius:4px;background:#efefef"></div>
<div style="position:absolute;left:1818px;top:413.6px;width:40.2px;height:8px;border-radius:4px;background:#0b6cf0"></div>
<div style="position:absolute;left:1850.2px;top:409.6px;width:16px;height:16px;border-radius:50%;background:#0b6cf0"></div>
<div class="t" style="left:1935px;top:410.1px;color:#222">2.5</div>
<div class="t" style="left:1638px;top:467.4px;line-height:25.2px;color:#222">Front<br>Coriolis M</div>
<div style="position:absolute;left:1759.5px;top:477.3px;width:43.0px;height:25.7px;border:1px solid #8d8d8d;border-radius:3px;background:#efefef"></div>
<div style="position:absolute;left:1765.0px;top:483.4px;width:32.0px;height:13.0px;border:1px solid #6a6a6a;background:#9a6b45"></div>
<div style="position:absolute;left:1818px;top:487.4px;width:101px;height:6px;border:1px solid #d2d2d2;border-radius:4px;background:#efefef"></div>
<div style="position:absolute;left:1818px;top:487.4px;width:7.6px;height:8px;border-radius:4px;background:#0b6cf0"></div>
<div style="position:absolute;left:1817.6px;top:483.4px;width:16px;height:16px;border-radius:50%;background:#0b6cf0"></div>
<div class="t" style="left:1935px;top:483.9px;color:#222">1</div>
<div style="position:absolute;left:1637px;top:534px;width:154px;height:40px;border:1px solid #cdcdcd;border-radius:4px"></div>
<div class="t" style="left:1652.5px;top:547.5px;color:#8a8a8a">Configuration …</div>
<div class="btn" style="left:1811px;top:534px;width:166px;height:41px;background:#1b1a2b">SAVE CONFIGURATION</div>
<div style="position:absolute;left:1637px;top:592px;width:340px;height:116px;background:#fff;border-radius:4px;box-shadow:0 2px 1px -1px rgba(0,0,0,0.2),0 1px 1px 0 rgba(0,0,0,0.14),0 1px 3px 0 rgba(0,0,0,0.12)"></div>
<div style="position:absolute;left:1637px;top:651px;width:340px;height:1px;background:#e0e0e0"></div>
<div class="t" style="left:1654.5px;top:616.4px;font-size:12.6px;color:#222">Name</div>
<div class="t" style="left:1906.5px;top:616.4px;font-size:12.6px;color:#222">Actions</div>
<div class="t" style="left:1637px;width:340px;text-align:center;top:674px;font-size:12.3px;color:#222">No saved configurations</div>
<div class="btn" style="left:1637px;top:730px;width:174px;height:42px;background:#4ade80">VALEURS NORMALISÉES</div>
<div class="btn" style="left:1828px;top:730px;width:114px;height:41px;background:#1b1a2b">RESET GRAPH</div>
</body></html>
